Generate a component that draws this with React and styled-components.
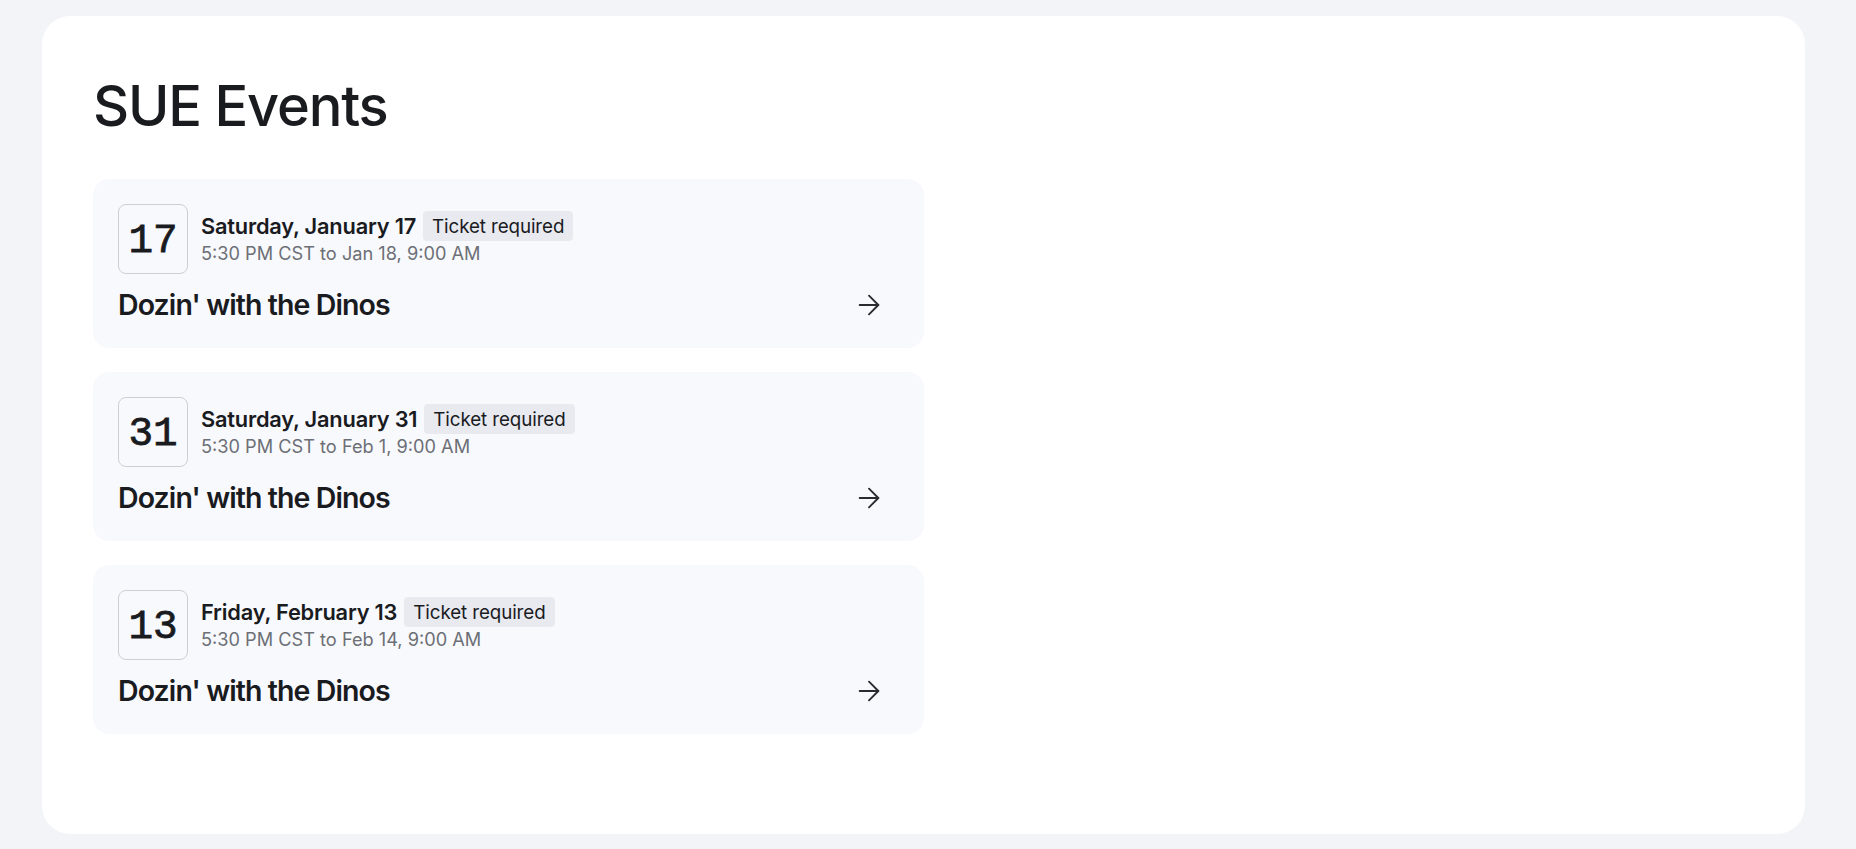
import React from "react";
import styled, { createGlobalStyle } from "styled-components";
import { ArrowRight } from "lucide-react";

const Global = createGlobalStyle`
  html, body { margin: 0; padding: 0; background: #f3f4f8; }
  body { font-family: Inter, "Noto Sans", sans-serif; color: #1a1b1f; }
  * { box-sizing: border-box; }
`;

const Page = styled.div`
  padding: 16px 51px 15px 42px;
  min-height: 849px;
  display: flex;
`;

const Panel = styled.main`
  flex: 1;
  background: #ffffff;
  border-radius: 28px;
  padding: 56px 51px 40px 51px;
  min-height: 818px;
`;

const Title = styled.h1`
  margin: 0;
  font-size: 56px;
  font-weight: 500;
  letter-spacing: -1.2px;
  line-height: 68px;
  color: #1a1b1f;
`;

const List = styled.div`
  margin-top: 39px;
  display: flex;
  flex-direction: column;
  gap: 24px;
  width: 831px;
`;

const Card = styled.a`
  display: flex;
  flex-direction: column;
  gap: 14px;
  height: 169px;
  padding: 25px 39px 25px 25px;
  background: #f8f9fc;
  border-radius: 16px;
  text-decoration: none;
  color: inherit;
`;

const Head = styled.div`
  display: flex;
  align-items: center;
  gap: 13px;
`;

const DateBox = styled.div`
  width: 70px;
  height: 70px;
  border: 1px solid #cdcfd4;
  border-radius: 8px;
  display: flex;
  align-items: center;
  justify-content: center;
  font-family: "Liberation Mono", "DejaVu Sans Mono", monospace;
  font-size: 41px;
  font-weight: 400;
  -webkit-text-stroke: 0.8px #1a1b1f;
  color: #1a1b1f;
  padding-top: 4px;
`;

const Info = styled.div`
  display: flex;
  flex-direction: column;
  gap: 1px;
  margin-top: -3px;
`;

const DateLine = styled.div`
  display: flex;
  align-items: center;
  gap: 7px;
`;

const DateText = styled.span`
  font-size: 21.8px;
  font-weight: 600;
  letter-spacing: -0.2px;
  color: #1a1b1f;
`;

const Badge = styled.span`
  background: #e8eaf0;
  border-radius: 4px;
  padding: 0 9px;
  height: 30px;
  display: inline-flex;
  align-items: center;
  font-size: 18.8px;
  font-weight: 400;
  letter-spacing: -0.1px;
  color: #1a1b1f;
`;

const TimeText = styled.span`
  font-size: 18.2px;
  font-weight: 400;
  letter-spacing: 0;
  color: #6c6f76;
`;

const Footer = styled.div`
  display: flex;
  align-items: center;
  justify-content: space-between;
`;

const EventName = styled.h2`
  margin: 0;
  font-size: 28.5px;
  font-weight: 600;
  letter-spacing: -0.9px;
  line-height: 34px;
  color: #1a1b1f;
`;

const Arrow = styled(ArrowRight)`
  color: #2a2b30;
  flex-shrink: 0;
`;

const events = [
  { day: "17", date: "Saturday, January 17", time: "5:30 PM CST to Jan 18, 9:00 AM" },
  { day: "31", date: "Saturday, January 31", time: "5:30 PM CST to Feb 1, 9:00 AM" },
  { day: "13", date: "Friday, February 13", time: "5:30 PM CST to Feb 14, 9:00 AM" },
];

export default function App() {
  return (
    <>
      <Global />
      <Page>
        <Panel>
          <Title>SUE Events</Title>
          <List>
            {events.map((e) => (
              <Card key={e.day} href="#">
                <Head>
                  <DateBox>{e.day}</DateBox>
                  <Info>
                    <DateLine>
                      <DateText>{e.date}</DateText>
                      <Badge>Ticket required</Badge>
                    </DateLine>
                    <TimeText>{e.time}</TimeText>
                  </Info>
                </Head>
                <Footer>
                  <EventName>Dozin' with the Dinos</EventName>
                  <Arrow size={32} strokeWidth={1.4} />
                </Footer>
              </Card>
            ))}
          </List>
        </Panel>
      </Page>
    </>
  );
}
